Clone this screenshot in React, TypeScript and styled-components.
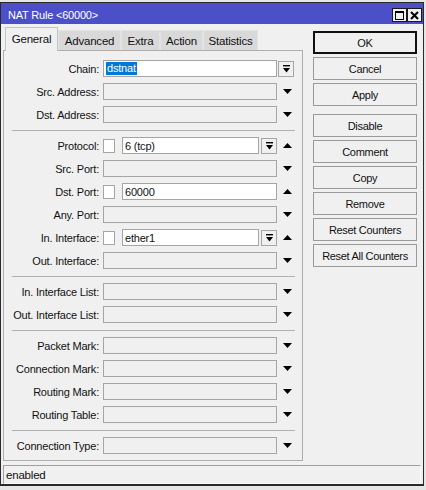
import React from 'react';
import styled, { createGlobalStyle } from 'styled-components';

const Global = createGlobalStyle`
  html, body { margin: 0; padding: 0; }
  body {
    width: 426px;
    height: 490px;
    overflow: hidden;
    background: #e6e6e6;
    font-family: "Liberation Sans", Arial, sans-serif;
    font-size: 11px;
    letter-spacing: -0.2px;
    color: #111;
  }
  * { box-sizing: border-box; }
`;

const Window = styled.div`
  margin-top: 2px;
  width: 424px;
  height: 484px;
  background: #f0f0f0;
  border-style: solid;
  border-color: #2a2a2a;
  border-width: 1px 1px 2px 1px;
  display: flex;
  flex-direction: column;
`;

const TitleBar = styled.div`
  height: 21px;
  flex: none;
  background: #4b50c8;
  color: #fff;
  display: flex;
  align-items: center;
  padding: 1px 1px 0 7px;
  font-size: 11px;
`;

const TitleText = styled.div`
  flex: 1;
  padding-top: 1px;
`;

const TitleButton = styled.div`
  width: 15px;
  height: 14px;
  background: #f0f0f0;
  border: 1px solid #1a1a1a;
  display: flex;
  align-items: center;
  justify-content: center;
  margin-top: 2px;
`;

const Body = styled.div`
  flex: 1;
  display: flex;
  padding: 3px 0 0 2px;
  gap: 10px;
`;

const LeftColumn = styled.div`
  width: 300px;
  display: flex;
  flex-direction: column;
`;

const TabRow = styled.div`
  height: 23px;
  display: flex;
  align-items: flex-end;
  padding-left: 2px;
  position: relative;
  z-index: 1;
`;

const Tab = styled.div<{ $w: number; $active?: boolean }>`
  width: ${(p) => p.$w}px;
  height: ${(p) => (p.$active ? 24 : 20)}px;
  margin-bottom: ${(p) => (p.$active ? -1 : 0)}px;
  background: ${(p) => (p.$active ? '#f0f0f0' : '#d9d9d9')};
  border: 1px solid ${(p) => (p.$active ? '#c4c4c4' : '#e3e3e3')};
  border-bottom: none;
  display: flex;
  justify-content: center;
  padding-top: ${(p) => (p.$active ? 5 : 4)}px;
  font-size: 11.5px;
`;

const Panel = styled.div`
  height: 411px;
  border: 1px solid #adadad;
  background: #f0f0f0;
  padding-top: 9px;
  display: flex;
  flex-direction: column;
`;

const Group = styled.div`
  display: flex;
  flex-direction: column;
  gap: 6px;
`;

const Separator = styled.div`
  margin: 7px 0 6px 8px;
  width: 283px;
  height: 1px;
  background: #b0b0b0;
`;

const Row = styled.div`
  display: grid;
  grid-template-columns: 99px 174px 18px;
  height: 17px;
  align-items: center;
`;

const Label = styled.div`
  text-align: right;
  padding-right: 4px;
  white-space: nowrap;
`;

const Field = styled.div`
  display: flex;
  align-items: center;
  height: 17px;
`;

const Input = styled.div<{ $filled?: boolean; $w?: number }>`
  height: 17px;
  ${(p) => (p.$w ? `width: ${p.$w}px;` : 'flex: 1;')}
  border: 1px solid #a5a5a5;
  background: ${(p) => (p.$filled ? '#fff' : '#f0f0f0')};
  padding-left: 2px;
  display: flex;
  align-items: center;
  white-space: nowrap;
  overflow: hidden;
`;

const Selected = styled.span`
  background: #0078d7;
  color: #fff;
  padding: 0 1px 1px 1px;
`;

const Check = styled.div`
  width: 12px;
  height: 14px;
  border: 1px solid #a5a5a5;
  background: #fff;
  margin-right: 7px;
  flex: none;
`;

const DropBox = styled.div<{ $ml?: number }>`
  width: 16px;
  height: 16px;
  margin-left: ${(p) => p.$ml ?? 2}px;
  border: 1px solid #a5a5a5;
  background: #f0f0f0;
  display: flex;
  align-items: center;
  justify-content: center;
  flex: none;
`;

const ArrowCell = styled.div`
  display: flex;
  align-items: center;
  justify-content: center;
  padding-left: 2px;
  height: 17px;
`;

const ButtonColumn = styled.div`
  width: 104px;
  padding-top: 4px;
  display: flex;
  flex-direction: column;
  gap: 3px;
`;

const Button = styled.div<{ $default?: boolean; $sep?: boolean }>`
  height: 23px;
  border: 1px solid ${(p) => (p.$default ? '#111' : '#9a9a9a')};
  box-shadow: ${(p) => (p.$default ? 'inset 0 0 0 1px #111' : 'none')};
  background: #f0f0f0;
  display: flex;
  align-items: center;
  justify-content: center;
  margin-top: ${(p) => (p.$sep ? 5 : 0)}px;
  font-size: 11px;
  letter-spacing: -0.3px;
`;

const StatusBar = styled.div`
  margin: 3px 0 0 2px;
  width: 418px;
  height: 19px;
  border-style: solid;
  border-width: 1px;
  border-color: #a0a0a0 #fafafa #fafafa #a0a0a0;
  padding-left: 2px;
  display: flex;
  align-items: center;
  font-size: 11.5px;
`;

const Down = () => (
  <svg width="9" height="5" viewBox="0 0 9 5">
    <polygon points="0,0 9,0 4.5,5" fill="#000" />
  </svg>
);

const Up = () => (
  <svg width="9" height="5" viewBox="0 0 9 5">
    <polygon points="0,5 9,5 4.5,0" fill="#000" />
  </svg>
);

const DropIcon = () => (
  <svg width="7" height="8" viewBox="0 0 7 8">
    <rect x="0" y="0" width="7" height="1.4" fill="#000" />
    <polygon points="0,3 7,3 3.5,7.5" fill="#000" />
  </svg>
);

type RowDef = {
  label: string;
  kind?: 'plain' | 'chain' | 'check' | 'checkDrop';
  value?: string;
  arrow?: 'down' | 'up' | 'none';
};

const groups: RowDef[][] = [
  [
    { label: 'Chain:', kind: 'chain', value: 'dstnat', arrow: 'none' },
    { label: 'Src. Address:' },
    { label: 'Dst. Address:' },
  ],
  [
    { label: 'Protocol:', kind: 'checkDrop', value: '6 (tcp)', arrow: 'up' },
    { label: 'Src. Port:' },
    { label: 'Dst. Port:', kind: 'check', value: '60000', arrow: 'up' },
    { label: 'Any. Port:' },
    { label: 'In. Interface:', kind: 'checkDrop', value: 'ether1', arrow: 'up' },
    { label: 'Out. Interface:' },
  ],
  [{ label: 'In. Interface List:' }, { label: 'Out. Interface List:' }],
  [
    { label: 'Packet Mark:' },
    { label: 'Connection Mark:' },
    { label: 'Routing Mark:' },
    { label: 'Routing Table:' },
  ],
  [{ label: 'Connection Type:' }],
];

const tabs = [
  { name: 'General', w: 53, active: true },
  { name: 'Advanced', w: 63 },
  { name: 'Extra', w: 39 },
  { name: 'Action', w: 43 },
  { name: 'Statistics', w: 55 },
];

const buttons = [
  { name: 'OK', def: true },
  { name: 'Cancel' },
  { name: 'Apply' },
  { name: 'Disable', sep: true },
  { name: 'Comment' },
  { name: 'Copy' },
  { name: 'Remove' },
  { name: 'Reset Counters' },
  { name: 'Reset All Counters' },
];

const FormRow: React.FC<{ r: RowDef }> = ({ r }) => {
  const kind = r.kind ?? 'plain';
  const arrow = r.arrow ?? 'down';
  return (
    <Row>
      <Label>{r.label}</Label>
      <Field>
        {kind === 'plain' && <Input />}
        {kind === 'chain' && (
          <Input $filled>
            <Selected>{r.value}</Selected>
          </Input>
        )}
        {kind === 'check' && (
          <>
            <Check />
            <Input $filled>{r.value}</Input>
          </>
        )}
        {kind === 'checkDrop' && (
          <>
            <Check />
            <Input $filled>{r.value}</Input>
            <DropBox>
              <DropIcon />
            </DropBox>
          </>
        )}
      </Field>
      {kind === 'chain' ? (
        <Field>
          <DropBox $ml={1}>
            <DropIcon />
          </DropBox>
        </Field>
      ) : (
        <ArrowCell>{arrow === 'down' ? <Down /> : arrow === 'up' ? <Up /> : null}</ArrowCell>
      )}
    </Row>
  );
};

export default function App() {
  return (
    <>
      <Global />
      <Window>
        <TitleBar>
          <TitleText>NAT Rule &lt;60000&gt;</TitleText>
          <TitleButton>
            <svg width="9" height="9" viewBox="0 0 9 9">
              <rect x="0.5" y="0.5" width="8" height="8" fill="none" stroke="#000" strokeWidth="1" />
              <rect x="0" y="0" width="9" height="2" fill="#000" />
            </svg>
          </TitleButton>
          <TitleButton>
            <svg width="9" height="9" viewBox="0 0 9 9">
              <path d="M1 1 L8 8 M8 1 L1 8" stroke="#000" strokeWidth="2" />
            </svg>
          </TitleButton>
        </TitleBar>
        <Body>
          <LeftColumn>
            <TabRow>
              {tabs.map((t) => (
                <Tab key={t.name} $w={t.w} $active={t.active}>
                  {t.name}
                </Tab>
              ))}
            </TabRow>
            <Panel>
              {groups.map((g, i) => (
                <React.Fragment key={i}>
                  {i > 0 && <Separator />}
                  <Group>
                    {g.map((r) => (
                      <FormRow key={r.label} r={r} />
                    ))}
                  </Group>
                </React.Fragment>
              ))}
            </Panel>
          </LeftColumn>
          <ButtonColumn>
            {buttons.map((b) => (
              <Button key={b.name} $default={b.def} $sep={b.sep}>
                {b.name}
              </Button>
            ))}
          </ButtonColumn>
        </Body>
        <StatusBar>enabled</StatusBar>
      </Window>
    </>
  );
}
